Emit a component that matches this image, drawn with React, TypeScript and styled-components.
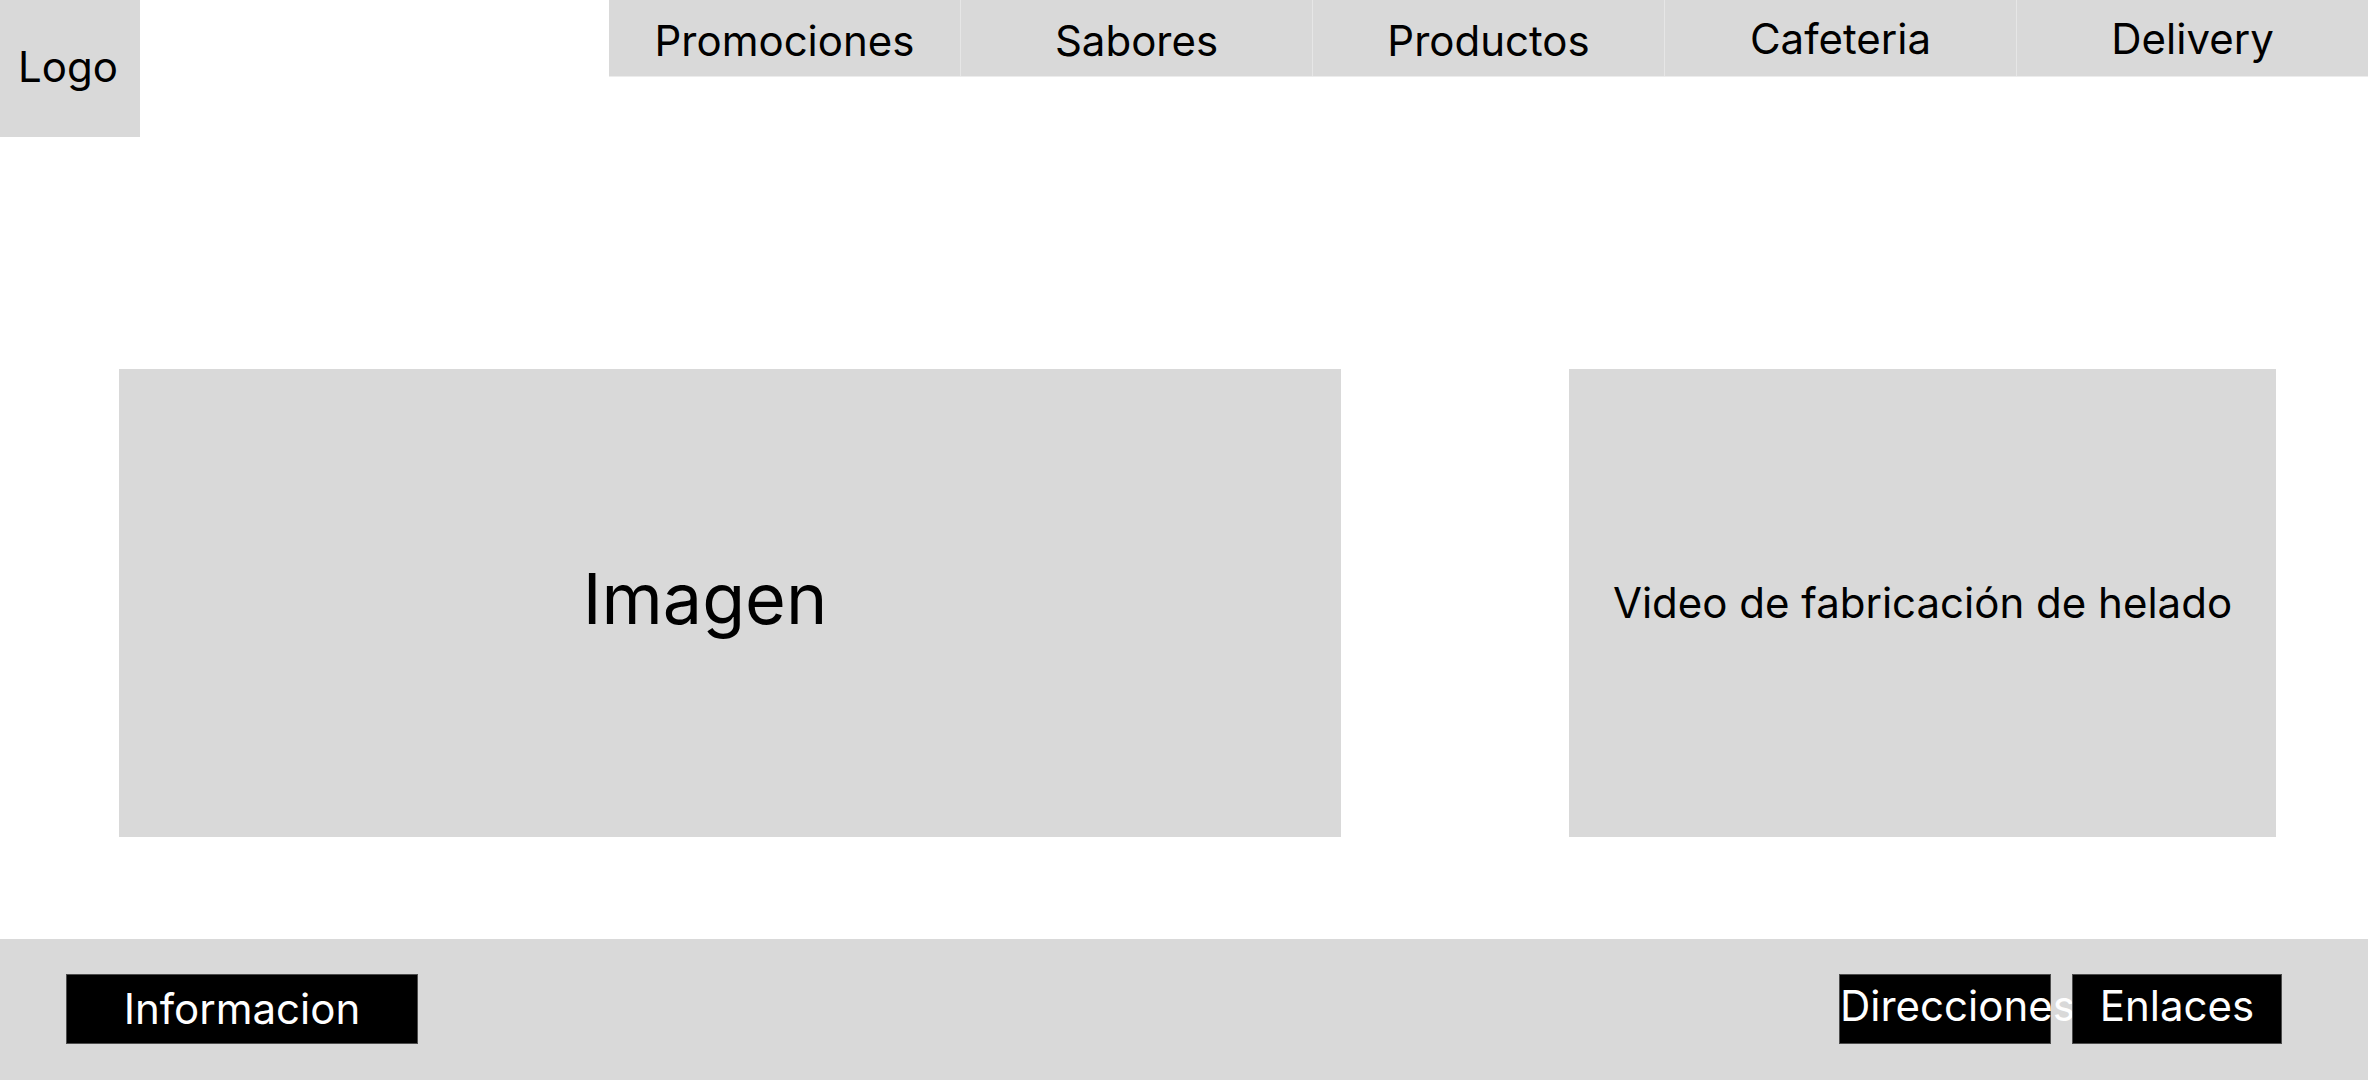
import React from "react";
import styled, { createGlobalStyle } from "styled-components";

const GlobalStyle = createGlobalStyle`
  html, body {
    margin: 0;
    padding: 0;
    background: #ffffff;
  }
  body {
    font-family: Inter, "Noto Sans", "Liberation Sans", sans-serif;
    color: #000000;
  }
  * { box-sizing: border-box; }
`;

const Page = styled.div`
  width: 2368px;
  height: 1080px;
  display: flex;
  flex-direction: column;
  overflow: hidden;
  background: #ffffff;
`;

const Header = styled.header`
  display: flex;
  justify-content: space-between;
  align-items: flex-start;
  height: 137px;
  flex-shrink: 0;
`;

const LogoBox = styled.div`
  width: 140px;
  height: 137px;
  background: #d9d9d9;
  display: flex;
  align-items: center;
  justify-content: center;
  font-size: 42px;
  line-height: 1;
  padding-bottom: 4px;
  padding-right: 4px;
`;

const Nav = styled.nav`
  width: 1759px;
  height: 77px;
  display: flex;
  background: #e6e6e6;
  gap: 1px;
  border-bottom: 1px solid #ececec;
`;

const NavItem = styled.a<{ $drop?: boolean }>`
  flex: 1;
  display: flex;
  align-items: center;
  justify-content: center;
  background: #d9d9d9;
  font-size: 42px;
  line-height: 1;
  color: #000000;
  text-decoration: none;
  padding-top: ${(p) => (p.$drop ? "6px" : "1px")};
`;

const Content = styled.main`
  display: flex;
  justify-content: space-between;
  align-items: flex-start;
  padding: 232px 92px 0 119px;
  height: 802px;
  flex-shrink: 0;
`;

const MediaCard = styled.div<{ $w: number; $size: number; $shift?: number }>`
  width: ${(p) => p.$w}px;
  height: 468px;
  background: #d9d9d9;
  display: flex;
  align-items: center;
  justify-content: center;
  font-size: ${(p) => p.$size}px;
  line-height: 1;
  padding-right: ${(p) => p.$shift ?? 0}px;
  padding-bottom: ${(p) => (p.$shift ? 8 : 0)}px;
`;

const Footer = styled.footer`
  flex: 1;
  background: #d9d9d9;
  display: flex;
  justify-content: space-between;
  align-items: flex-start;
  padding: 35px 86px 0 66px;
`;

const FooterGroup = styled.div`
  display: flex;
  gap: 21px;
`;

const FooterButton = styled.a<{ $w: number; $left?: boolean; $up?: boolean }>`
  width: ${(p) => p.$w}px;
  height: 70px;
  background: #000000;
  border: 1px solid #4d4d4d;
  color: #ffffff;
  display: flex;
  align-items: center;
  justify-content: ${(p) => (p.$left ? "flex-start" : "center")};
  padding-bottom: ${(p) => (p.$up ? "6px" : "0")};
  font-size: 42px;
  line-height: 1;
  white-space: nowrap;
  overflow: visible;
  text-decoration: none;
`;

const navItems = [
  { label: "Promociones", drop: true },
  { label: "Sabores", drop: true },
  { label: "Productos", drop: true },
  { label: "Cafeteria", drop: false },
  { label: "Delivery", drop: false },
];

export default function App() {
  return (
    <>
      <GlobalStyle />
      <Page>
        <Header>
          <LogoBox>Logo</LogoBox>
          <Nav>
            {navItems.map((n) => (
              <NavItem key={n.label} $drop={n.drop}>
                {n.label}
              </NavItem>
            ))}
          </Nav>
        </Header>
        <Content>
          <MediaCard $w={1222} $size={70} $shift={50}>
            Imagen
          </MediaCard>
          <MediaCard $w={707} $size={42}>
            Video de fabricación de helado
          </MediaCard>
        </Content>
        <Footer>
          <FooterButton $w={352}>Informacion</FooterButton>
          <FooterGroup>
            <FooterButton $w={212} $left $up>
              Direcciones
            </FooterButton>
            <FooterButton $w={210} $up>
              Enlaces
            </FooterButton>
          </FooterGroup>
        </Footer>
      </Page>
    </>
  );
}
